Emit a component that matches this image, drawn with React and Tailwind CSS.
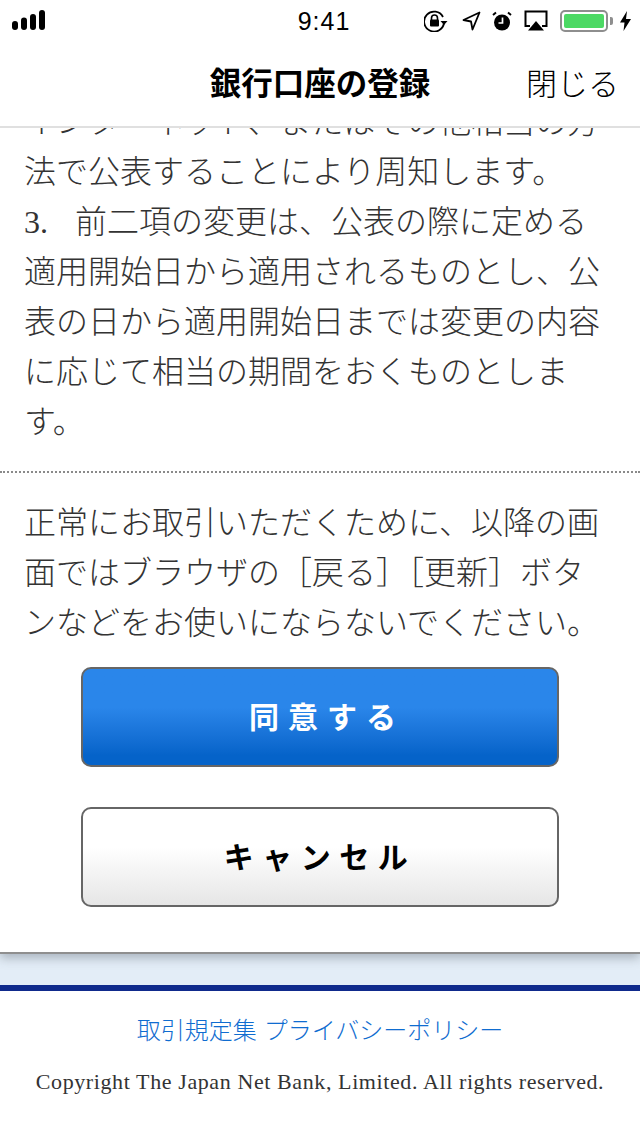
import React from 'react';

const bodyFont = "font-['Liberation_Serif','Noto_Sans_CJK_JP',serif]";
const uiFont = "font-['Liberation_Sans','Noto_Sans_CJK_JP',sans-serif]";

function StatusBar() {
  return (
    <div className={`relative flex h-[44px] items-start justify-between pl-[12px] pr-[9px] pt-[10px] text-black ${uiFont}`}>
      <svg width="34" height="20" viewBox="0 0 34 20" fill="black">
        <rect x="0" y="11" width="6" height="9" rx="3" />
        <rect x="9" y="7.5" width="6" height="12.5" rx="3" />
        <rect x="18" y="4" width="6" height="16" rx="3" />
        <rect x="27" y="0" width="6" height="20" rx="3" />
      </svg>
      <span className="absolute left-0 right-0 top-[7px] pl-[8px] text-center text-[25px] font-medium leading-[28px] tracking-[1px]">9:41</span>
      <div className="flex items-center gap-[14px]">
        <svg width="24" height="22" viewBox="0 0 24 22" fill="none">
          <path d="M19 7 A10 10 0 1 0 20 13" stroke="black" strokeWidth="1.8" />
          <path d="M16.5 11 L23.5 11 L20 15 Z" fill="black" />
          <path d="M7.5 10 V8 a3 3 0 0 1 6 0 V10" stroke="black" strokeWidth="1.6" />
          <rect x="6" y="9.5" width="9" height="7" rx="1" fill="black" />
        </svg>
        <svg width="19" height="20" viewBox="0 0 19 20" fill="none">
          <path d="M17.5 1.5 L1.5 9 L9 10.5 L10.5 18.5 Z" stroke="black" strokeWidth="1.8" strokeLinejoin="round" />
        </svg>
        <svg width="20" height="20" viewBox="0 0 20 20" fill="none" className="-ml-[3px]">
          <circle cx="10" cy="11.5" r="8" fill="black" />
          <path d="M10.5 6.5 V12 H6.5" stroke="white" strokeWidth="1.7" />
          <path d="M1 4 L4 1.5 M19 4 L16 1.5" stroke="black" strokeWidth="2" />
        </svg>
        <svg width="24" height="22" viewBox="0 0 24 22" fill="none" className="-ml-[2px]">
          <path d="M6 16 H1.5 V1.5 H22.5 V16 H18" stroke="black" strokeWidth="2" />
          <path d="M12 11 L20 20.5 H4 Z" fill="black" />
        </svg>
        <div className="-ml-[2px] flex items-center">
          <div className="h-[22px] w-[48px] rounded-[5px] border-2 border-[#8e8e8e] p-[2px]">
            <div className="h-full w-full rounded-[2px] bg-[#4cd964]" />
          </div>
          <div className="ml-[2px] h-[8px] w-[3px] rounded-r-[2px] bg-[#8e8e8e]" />
          <svg width="11" height="20" viewBox="0 0 11 20" fill="black" className="ml-[7px]">
            <path d="M7 0 L0 11.5 H4.5 L3.5 20 L11 8 H6 Z" />
          </svg>
        </div>
      </div>
    </div>
  );
}

function NavBar() {
  return (
    <div className={`relative z-10 flex h-[84px] items-center justify-center border-b-2 border-[#e0e0e0] bg-white pb-[1px] ${uiFont}`}>
      <h1 className="text-[31.5px] font-bold leading-none text-black">銀行口座の登録</h1>
      <span className="absolute right-[21px] top-[21px] text-[31px] font-light leading-[40px] text-black">閉じる</span>
    </div>
  );
}

function Terms() {
  return (
    <div className={`relative flex h-[824px] flex-col justify-end overflow-hidden bg-white font-light shadow-[0_1px_0_1px_#8f8f8f,0_6px_10px_rgba(60,70,80,0.35)] ${bodyFont}`}>
      <div className="border-b-2 border-dotted border-[#8a8a8a] pb-[24px] pl-[24px] pr-[25px] text-[32px] leading-[50px] text-[#333]">
        <p>インターネット、またはその他相当の方法で公表することにより周知します。</p>
        <p>
          <span className="inline-block w-[51px] font-normal">3.</span>
          前二項の変更は、公表の際に定める適用開始日から適用されるものとし、公表の日から適用開始日までは変更の内容に応じて相当の期間をおくものとします。
        </p>
      </div>
      <p className="pl-[24px] pr-[25px] pt-[25px] text-[32px] leading-[50px] text-[#333]">
        正常にお取引いただくために、以降の画面ではブラウザの［戻る］［更新］ボタンなどをお使いにならないでください。
      </p>
      <div className={`flex flex-col gap-[40px] px-[81px] pb-[45px] pt-[19px] ${uiFont}`}>
        <button className="h-[100px] rounded-[10px] border-2 border-[#666] bg-gradient-to-b from-[#2a86ea] from-40% to-[#0563c9] to-90% pl-[14px] text-[30px] font-bold tracking-[9px] text-white">
          同意する
        </button>
        <button className="h-[100px] rounded-[10px] border-2 border-[#666] bg-gradient-to-b from-white from-40% to-[#e6e6e6] text-[30px] font-bold tracking-[8.5px] text-black">
          キャンセル
        </button>
      </div>
    </div>
  );
}

function Footer() {
  return (
    <div className={`flex flex-1 flex-col items-center border-t-[6px] border-[#0f2a8c] bg-white ${bodyFont}`}>
      <div className="mt-[24px] flex gap-[7px] text-[24px] font-light leading-[32px] text-[#0f6cd0]">
        <a>取引規定集</a>
        <a>プライバシーポリシー</a>
      </div>
      <p className="mt-[19px] text-[22px] leading-[32px] tracking-[0.6px] text-[#333]">
        Copyright The Japan Net Bank, Limited. All rights reserved.
      </p>
    </div>
  );
}

export default function App() {
  return (
    <div className="flex h-[1136px] w-[640px] flex-col overflow-hidden bg-white">
      <StatusBar />
      <NavBar />
      <Terms />
      <div className="h-[33px] bg-[#e3edf7]" />
      <Footer />
    </div>
  );
}
